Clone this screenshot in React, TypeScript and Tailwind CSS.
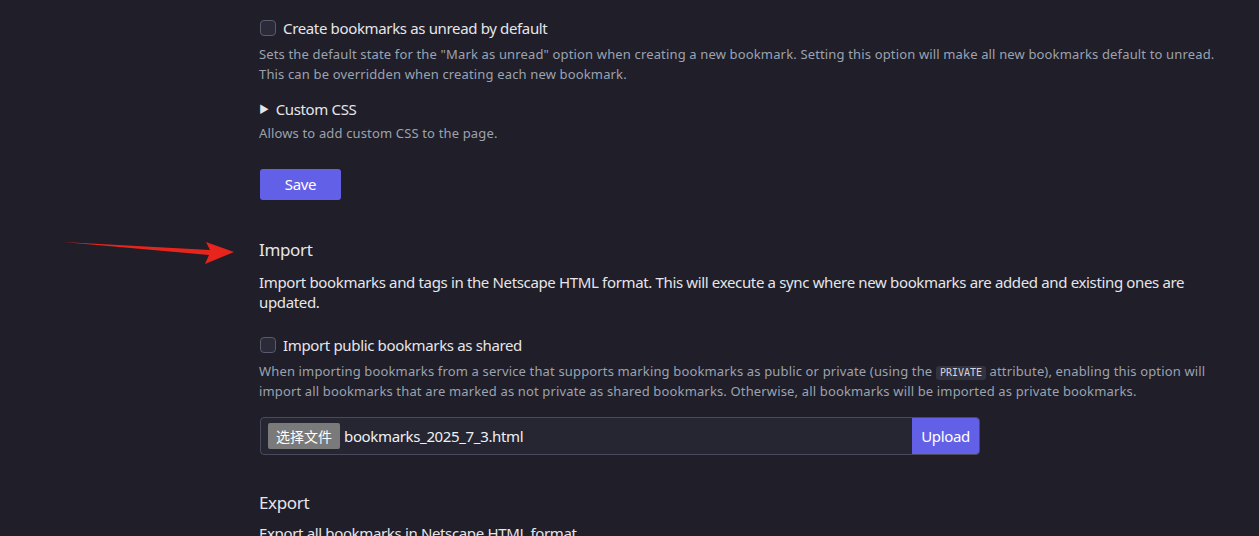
import React from "react";

const font = { fontFamily: '"Noto Sans", "Noto Sans CJK SC", sans-serif' };

function Checkbox() {
  return (
    <span className="inline-block ml-px w-4 h-4 rounded-[4px] border border-[#5a5a6e] bg-[#2a2a38] shrink-0" />
  );
}

export default function App() {
  return (
    <div className="relative w-[1259px] h-[536px] overflow-hidden bg-[#1f1e29]" style={font}>
      <svg className="absolute left-[60px] top-[238px]" width="180" height="30" viewBox="0 0 180 30">
        <path d="M3 4 L150 12 L146 4 L174 14 L145 26 L149 17 Z" fill="#e8251c" />
      </svg>

      <div className="pl-[259px] pr-[30px] pt-[18px]">
        <label className="flex items-center gap-[7px] text-[15px] leading-[20px] tracking-[-0.35px] text-[#e6e6ea]">
          <Checkbox />
          Create bookmarks as unread by default
        </label>
        <p className="mt-[6px] text-[13px] leading-[20px] tracking-[0.15px] text-[#9ca3af]">
          Sets the default state for the "Mark as unread" option when creating a new bookmark. Setting this option will make all new bookmarks default to unread. This can be overridden when creating each new bookmark.
        </p>

        <div className="mt-[15px] flex items-center gap-[7px] text-[15px] leading-[20px] tracking-[-0.35px] text-[#e6e6ea]">
          <span className="text-[10px] text-[#e6e6ea]">▶</span>
          Custom CSS
        </div>
        <p className="mt-[4px] text-[13px] leading-[20px] tracking-[0.15px] text-[#9ca3af]">Allows to add custom CSS to the page.</p>

        <button className="ml-px mt-[26px] w-[81px] h-[31px] rounded-[3px] bg-[#6360e8] text-[15px] tracking-[-0.35px] text-white">Save</button>

        <h2 className="mt-[38px] text-[17px] leading-[24px] tracking-[-0.35px] text-[#e6e6ea]">Import</h2>
        <p className="mt-[10px] text-[15px] leading-[20px] tracking-[-0.35px] text-[#e6e6ea]">
          Import bookmarks and tags in the Netscape HTML format. This will execute a sync where new bookmarks are added and existing ones are updated.
        </p>

        <label className="mt-[23px] flex items-center gap-[7px] text-[15px] leading-[20px] tracking-[-0.35px] text-[#e6e6ea]">
          <Checkbox />
          Import public bookmarks as shared
        </label>
        <p className="mt-[6px] text-[13px] leading-[20px] tracking-[0.15px] text-[#9ca3af]">
          When importing bookmarks from a service that supports marking bookmarks as public or private (using the{" "}
          <code className="inline-block px-[4px] leading-[14px] rounded-[3px] bg-[#33323f] text-[10px] tracking-normal text-[#d4d4dc]" style={{ fontFamily: '"DejaVu Sans Mono", monospace' }}>PRIVATE</code>{" "}
          attribute), enabling this option will import all bookmarks that are marked as not private as shared bookmarks. Otherwise, all bookmarks will be imported as private bookmarks.
        </p>

        <div className="ml-px mt-[16px] flex w-[720px] h-[38px] rounded-[4px] border border-[#4a4a5e] bg-[#262633] overflow-hidden">
          <div className="flex-1 flex items-center pl-[7px] gap-[4px]">
            <span className="h-[26px] px-[8px] flex items-center rounded-[2px] bg-[#7a7a7a] text-[14px] text-white">选择文件</span>
            <span className="text-[15px] tracking-[-0.35px] text-[#f0f0f0]">bookmarks_2025_7_3.html</span>
          </div>
          <button className="w-[67px] bg-[#6360e8] text-[15px] tracking-[-0.35px] text-white">Upload</button>
        </div>

        <h2 className="mt-[36px] text-[17px] leading-[24px] tracking-[-0.35px] text-[#e6e6ea]">Export</h2>
        <p className="mt-[8px] text-[15px] leading-[20px] tracking-[-0.35px] text-[#e6e6ea]">Export all bookmarks in Netscape HTML format.</p>
      </div>
    </div>
  );
}
